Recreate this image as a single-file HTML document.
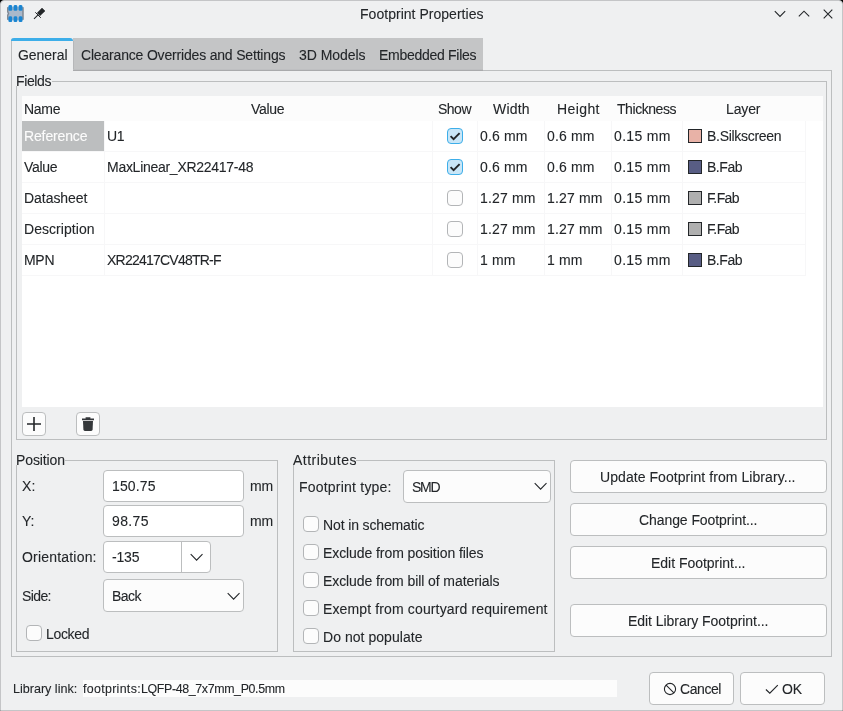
<!DOCTYPE html>
<html>
<head>
<meta charset="utf-8">
<title>Footprint Properties</title>
<style>
html,body{margin:0;padding:0;}
body{width:843px;height:711px;overflow:hidden;background:#000;position:relative;
  font-family:"Liberation Sans",sans-serif;color:#232629;font-size:13.7px;}
#win{position:absolute;left:0;top:0;width:841px;height:709px;background:#eff0f1;
  border:1px solid #c4c5c7;border-radius:4px 4px 0 0;}
.abs,.t,.ln,.box,.btn,.inp,.cb,.sw{position:absolute;box-sizing:border-box;}
.t{white-space:pre;height:20px;line-height:20px;will-change:transform;-webkit-text-stroke:0.1px currentColor;}
.ln{background:#bcbebf;}
.box{border:1px solid #bcbebf;}
.btn{background:#fcfcfc;border:1px solid #bcbebf;border-radius:4px;}
.inp{background:#ffffff;border:1px solid #bcbebf;border-radius:4px;}
.cb{width:16px;height:16px;background:#fcfcfc;border:1px solid #b3b5b7;border-radius:4px;}
.cb.on{background:#c9e6f7;border-color:#3daee9;}
.sw{width:14px;height:14px;border:1px solid #232629;}
.gl{position:absolute;background:#f7f7f8;}
svg{position:absolute;overflow:visible;}
</style>
</head>
<body>
<div id="win"></div>

<!-- title bar icons -->
<svg style="left:6.8px;top:5.4px" width="17" height="17" viewBox="0 0 17 17">
  <rect x="0.3" y="1.9" width="16.2" height="13.2" rx="0.8" fill="#aab8ca"/>
  <path d="M0.8 2.2 V7 L1.6 8.5 L0.8 10 V14.8 M16 2.2 V14.8" stroke="#6d7176" stroke-width="1" fill="none"/>
  <rect x="1.4" y="0" width="3.9" height="5.8" rx="1.3" ry="1.6" fill="#1b85d1"/>
  <rect x="6.5" y="0" width="3.9" height="5.8" rx="1.3" ry="1.6" fill="#1b85d1"/>
  <rect x="11.6" y="0" width="3.9" height="5.8" rx="1.3" ry="1.6" fill="#1b85d1"/>
  <rect x="1.4" y="11.3" width="3.9" height="5.7" rx="1.3" ry="1.6" fill="#1b85d1"/>
  <rect x="6.5" y="11.3" width="3.9" height="5.7" rx="1.3" ry="1.6" fill="#1b85d1"/>
  <rect x="11.6" y="11.3" width="3.9" height="5.7" rx="1.3" ry="1.6" fill="#1b85d1"/>
</svg>
<svg style="left:33px;top:7px" width="13" height="13" viewBox="0 0 13 13">
  <path d="M9 1.1 L12 4 L7 8.7 L4.2 5.9 Z" fill="#232629" stroke="#232629" stroke-width="0.5" stroke-linejoin="round"/>
  <path d="M2.3 5.3 L7.8 10.8" stroke="#232629" stroke-width="1" fill="none"/>
  <path d="M4.8 8.1 L1 11.9" stroke="#232629" stroke-width="1.1" fill="none"/>
</svg>
<!-- window buttons -->
<svg style="left:774px;top:8px" width="12" height="12" viewBox="0 0 12 12">
  <path d="M0.8 3.2 L6 8.4 L11.2 3.2" stroke="#232629" stroke-width="1.1" fill="none"/>
</svg>
<svg style="left:798px;top:8px" width="12" height="12" viewBox="0 0 12 12">
  <path d="M0.8 8.4 L6 3.2 L11.2 8.4" stroke="#232629" stroke-width="1.1" fill="none"/>
</svg>
<svg style="left:822px;top:8px" width="12" height="12" viewBox="0 0 12 12">
  <path d="M1.7 1.7 L10.3 10.3 M10.3 1.7 L1.7 10.3" stroke="#232629" stroke-width="1.1" fill="none"/>
</svg>

<!-- tab bar -->
<div class="abs" style="left:73px;top:38px;width:410px;height:32px;background:#c4c5c6;"></div>
<div class="abs" style="left:73px;top:41px;width:1px;height:29px;background:#b6b7b9;"></div>
<div class="abs" style="left:73px;top:69px;width:410px;height:1px;background:#bebfc1;"></div>
<!-- tab pane frame -->
<div class="box" style="left:11px;top:70px;width:821px;height:587px;"></div>
<!-- active tab -->
<div class="abs" style="left:11px;top:38px;width:62px;height:33px;background:#eff0f1;border-left:1px solid #bcbebf;border-radius:3px 3px 0 0;"></div>
<div class="abs" style="left:11px;top:38px;width:62px;height:3px;background:#3daee9;border-radius:3px 3px 0 0;"></div>

<div class="abs" style="left:73px;top:70px;width:410px;height:1px;background:#a9aaac;"></div>
<!-- Fields group -->
<div class="box" style="left:16px;top:81px;width:811px;height:359px;"></div>
<div class="abs" style="left:16px;top:76px;width:36px;height:10px;background:#eff0f1;"></div>

<!-- grid -->
<div class="abs" style="left:22px;top:96px;width:801px;height:311px;background:#ffffff;"></div>
<div class="abs" style="left:22px;top:96px;width:801px;height:25px;background:#fcfcfc;"></div>
<!-- selected cell -->
<div class="abs" style="left:22px;top:121px;width:82px;height:30px;background:#bcbebf;"></div>
<!-- grid lines horizontal -->
<div class="gl" style="left:22px;top:151px;width:784px;height:1px;"></div>
<div class="gl" style="left:22px;top:182px;width:784px;height:1px;"></div>
<div class="gl" style="left:22px;top:213px;width:784px;height:1px;"></div>
<div class="gl" style="left:22px;top:244px;width:784px;height:1px;"></div>
<div class="gl" style="left:22px;top:275px;width:784px;height:1px;"></div>
<!-- grid lines vertical -->
<div class="gl" style="left:104px;top:121px;width:1px;height:155px;"></div>
<div class="gl" style="left:432px;top:121px;width:1px;height:155px;"></div>
<div class="gl" style="left:477px;top:121px;width:1px;height:155px;"></div>
<div class="gl" style="left:544px;top:121px;width:1px;height:155px;"></div>
<div class="gl" style="left:611px;top:121px;width:1px;height:155px;"></div>
<div class="gl" style="left:682px;top:121px;width:1px;height:155px;"></div>
<div class="gl" style="left:805px;top:121px;width:1px;height:155px;"></div>

<!-- grid checkboxes -->
<div class="cb on" style="left:447px;top:128px;"></div>
<div class="cb on" style="left:447px;top:159px;"></div>
<div class="cb" style="left:447px;top:190px;"></div>
<div class="cb" style="left:447px;top:221px;"></div>
<div class="cb" style="left:447px;top:252px;"></div>
<svg style="left:447px;top:128px" width="16" height="16" viewBox="0 0 16 16"><path d="M3.6 8.2 L6.6 11.2 L12.6 5.2" stroke="#232629" stroke-width="1.9" fill="none"/></svg>
<svg style="left:447px;top:159px" width="16" height="16" viewBox="0 0 16 16"><path d="M3.6 8.2 L6.6 11.2 L12.6 5.2" stroke="#232629" stroke-width="1.9" fill="none"/></svg>

<!-- swatches -->
<div class="sw" style="left:688px;top:129px;background:#e8b2a7;"></div>
<div class="sw" style="left:688px;top:160px;background:#585d84;"></div>
<div class="sw" style="left:688px;top:191px;background:#afafaf;"></div>
<div class="sw" style="left:688px;top:222px;background:#afafaf;"></div>
<div class="sw" style="left:688px;top:253px;background:#585d84;"></div>

<!-- add / delete buttons -->
<div class="btn" style="left:22px;top:412px;width:24px;height:24px;"></div>
<svg style="left:26px;top:416px" width="16" height="16" viewBox="0 0 16 16"><path d="M8 1 V15 M1 8 H15" stroke="#232629" stroke-width="1.6" fill="none"/></svg>
<div class="btn" style="left:76px;top:412px;width:24px;height:24px;"></div>
<svg style="left:80px;top:416px" width="16" height="16" viewBox="0 0 16 16">
  <path d="M5.6 1.2 H10.4 V2.4 H14 V4.3 H2 V2.4 H5.6 Z" fill="#34373a"/>
  <path d="M3 5.1 H13 L12.6 13.6 Q12.5 15 11.2 15 H4.8 Q3.5 15 3.4 13.6 Z" fill="#34373a"/>
</svg>

<!-- Position group -->
<div class="box" style="left:16px;top:460px;width:262px;height:192px;"></div>
<div class="abs" style="left:16px;top:455px;width:48.5px;height:10px;background:#eff0f1;"></div>
<div class="inp" style="left:103px;top:470px;width:141px;height:32px;"></div>
<div class="inp" style="left:103px;top:505px;width:141px;height:32px;"></div>
<div class="inp" style="left:103px;top:541px;width:108px;height:32px;"></div>
<div class="ln" style="left:181px;top:542px;width:1px;height:30px;"></div>
<svg style="left:189.5px;top:551px" width="13" height="13" viewBox="0 0 13 13"><path d="M0.7 3.2 L6.6 9.1 L12.5 3.2" stroke="#232629" stroke-width="1.1" fill="none"/></svg>
<div class="btn" style="left:103px;top:579px;width:141px;height:33px;"></div>
<svg style="left:226.5px;top:589.5px" width="13" height="13" viewBox="0 0 13 13"><path d="M0.7 3.2 L6.6 9.1 L12.5 3.2" stroke="#232629" stroke-width="1.1" fill="none"/></svg>
<div class="cb" style="left:26px;top:625px;"></div>

<!-- Attributes group -->
<div class="box" style="left:293px;top:460px;width:262px;height:192px;"></div>
<div class="abs" style="left:293px;top:455px;width:63.3px;height:10px;background:#eff0f1;"></div>
<div class="btn" style="left:403px;top:470px;width:148px;height:33px;"></div>
<svg style="left:533.5px;top:480.3px" width="13" height="13" viewBox="0 0 13 13"><path d="M0.7 3.2 L6.6 9.1 L12.5 3.2" stroke="#232629" stroke-width="1.1" fill="none"/></svg>
<div class="cb" style="left:303px;top:516px;"></div>
<div class="cb" style="left:303px;top:544px;"></div>
<div class="cb" style="left:303px;top:572px;"></div>
<div class="cb" style="left:303px;top:600px;"></div>
<div class="cb" style="left:303px;top:628px;"></div>

<!-- right buttons -->
<div class="btn" style="left:570px;top:460px;width:257px;height:33px;"></div>
<div class="btn" style="left:570px;top:503px;width:257px;height:33px;"></div>
<div class="btn" style="left:570px;top:546px;width:257px;height:33px;"></div>
<div class="btn" style="left:570px;top:604px;width:257px;height:33px;"></div>

<!-- bottom row -->
<div class="abs" style="left:83px;top:680px;width:534px;height:17px;background:#fcfcfc;"></div>
<div class="btn" style="left:649px;top:672px;width:85px;height:33px;"></div>
<div class="btn" style="left:740px;top:672px;width:85px;height:33px;"></div>
<svg style="left:663px;top:681.7px" width="14" height="14" viewBox="0 0 14 14"><circle cx="7" cy="7" r="5.6" stroke="#232629" stroke-width="1.1" fill="none"/><path d="M3.1 3.1 L10.9 10.9" stroke="#232629" stroke-width="1.1"/></svg>
<svg style="left:765px;top:681.7px" width="14" height="14" viewBox="0 0 14 14"><path d="M0.9 7.5 L4.8 11.2 L12.8 3.1" stroke="#232629" stroke-width="1.1" fill="none"/></svg>

<span class="t" style="left:360px;top:4px;font-size:14px;letter-spacing:0.029px;">Footprint Properties</span>
<span class="t" style="left:18px;top:45px;font-size:14px;letter-spacing:-0.052px;">General</span>
<span class="t" style="left:81px;top:45px;font-size:14px;letter-spacing:-0.181px;">Clearance Overrides and Settings</span>
<span class="t" style="left:299px;top:45px;font-size:14px;letter-spacing:-0.053px;">3D Models</span>
<span class="t" style="left:379px;top:45px;font-size:14px;letter-spacing:-0.282px;">Embedded Files</span>
<span class="t" style="left:16px;top:71px;font-size:14px;letter-spacing:-0.372px;">Fields</span>
<span class="t" style="left:24px;top:99px;font-size:14px;letter-spacing:-0.286px;">Name</span>
<span class="t" style="left:251px;top:99px;font-size:14px;letter-spacing:-0.320px;">Value</span>
<span class="t" style="left:438px;top:99px;font-size:14px;letter-spacing:-0.510px;">Show</span>
<span class="t" style="left:493px;top:99px;font-size:14px;letter-spacing:0.176px;">Width</span>
<span class="t" style="left:557px;top:99px;font-size:14px;letter-spacing:0.406px;">Height</span>
<span class="t" style="left:617px;top:99px;font-size:14px;letter-spacing:-0.441px;">Thickness</span>
<span class="t" style="left:726px;top:99px;font-size:14px;letter-spacing:-0.133px;">Layer</span>
<span class="t" style="left:24px;top:126px;font-size:14px;letter-spacing:-0.137px;color:#fcfcfc">Reference</span>
<span class="t" style="left:107px;top:126px;font-size:14px;letter-spacing:-0.406px;">U1</span>
<span class="t" style="left:480px;top:126px;font-size:14px;letter-spacing:0.163px;">0.6 mm</span>
<span class="t" style="left:547px;top:126px;font-size:14px;letter-spacing:0.163px;">0.6 mm</span>
<span class="t" style="left:614px;top:126px;font-size:14px;letter-spacing:0.339px;">0.15 mm</span>
<span class="t" style="left:707px;top:126px;font-size:14px;letter-spacing:-0.301px;">B.Silkscreen</span>
<span class="t" style="left:24px;top:157px;font-size:14px;letter-spacing:-0.320px;">Value</span>
<span class="t" style="left:107px;top:157px;font-size:14px;letter-spacing:-0.277px;">MaxLinear_XR22417-48</span>
<span class="t" style="left:480px;top:157px;font-size:14px;letter-spacing:0.163px;">0.6 mm</span>
<span class="t" style="left:547px;top:157px;font-size:14px;letter-spacing:0.163px;">0.6 mm</span>
<span class="t" style="left:614px;top:157px;font-size:14px;letter-spacing:0.339px;">0.15 mm</span>
<span class="t" style="left:707px;top:157px;font-size:14px;letter-spacing:-0.465px;">B.Fab</span>
<span class="t" style="left:24px;top:188px;font-size:14px;letter-spacing:-0.041px;">Datasheet</span>
<span class="t" style="left:480px;top:188px;font-size:14px;letter-spacing:0.172px;">1.27 mm</span>
<span class="t" style="left:547px;top:188px;font-size:14px;letter-spacing:0.172px;">1.27 mm</span>
<span class="t" style="left:614px;top:188px;font-size:14px;letter-spacing:0.339px;">0.15 mm</span>
<span class="t" style="left:707px;top:188px;font-size:14px;letter-spacing:-0.629px;">F.Fab</span>
<span class="t" style="left:24px;top:219px;font-size:14px;letter-spacing:0.047px;">Description</span>
<span class="t" style="left:480px;top:219px;font-size:14px;letter-spacing:0.172px;">1.27 mm</span>
<span class="t" style="left:547px;top:219px;font-size:14px;letter-spacing:0.172px;">1.27 mm</span>
<span class="t" style="left:614px;top:219px;font-size:14px;letter-spacing:0.339px;">0.15 mm</span>
<span class="t" style="left:707px;top:219px;font-size:14px;letter-spacing:-0.629px;">F.Fab</span>
<span class="t" style="left:24px;top:250px;font-size:14px;letter-spacing:-0.312px;">MPN</span>
<span class="t" style="left:107px;top:250px;font-size:14px;letter-spacing:-0.770px;">XR22417CV48TR-F</span>
<span class="t" style="left:480px;top:250px;font-size:14px;letter-spacing:0.167px;">1 mm</span>
<span class="t" style="left:547px;top:250px;font-size:14px;letter-spacing:0.167px;">1 mm</span>
<span class="t" style="left:614px;top:250px;font-size:14px;letter-spacing:0.339px;">0.15 mm</span>
<span class="t" style="left:707px;top:250px;font-size:14px;letter-spacing:-0.465px;">B.Fab</span>
<span class="t" style="left:16px;top:450px;font-size:14px;letter-spacing:-0.116px;">Position</span>
<span class="t" style="left:22px;top:476px;font-size:14px;letter-spacing:0.266px;">X:</span>
<span class="t" style="left:112px;top:476px;font-size:14px;letter-spacing:0.134px;">150.75</span>
<span class="t" style="left:250px;top:476px;font-size:14px;letter-spacing:-0.228px;">mm</span>
<span class="t" style="left:22px;top:511px;font-size:14px;letter-spacing:0.031px;">Y:</span>
<span class="t" style="left:112px;top:511px;font-size:14px;letter-spacing:0.363px;">98.75</span>
<span class="t" style="left:250px;top:511px;font-size:14px;letter-spacing:-0.228px;">mm</span>
<span class="t" style="left:22px;top:547px;font-size:14px;letter-spacing:0.193px;">Orientation:</span>
<span class="t" style="left:112px;top:547px;font-size:14px;letter-spacing:-0.177px;">-135</span>
<span class="t" style="left:22px;top:586px;font-size:14px;letter-spacing:-0.605px;">Side:</span>
<span class="t" style="left:112px;top:586px;font-size:14px;letter-spacing:-0.542px;">Back</span>
<span class="t" style="left:46px;top:624px;font-size:14px;letter-spacing:-0.331px;">Locked</span>
<span class="t" style="left:293px;top:450px;font-size:14px;letter-spacing:0.484px;">Attributes</span>
<span class="t" style="left:299px;top:477px;font-size:14px;letter-spacing:0.214px;">Footprint type:</span>
<span class="t" style="left:412px;top:477px;font-size:14px;letter-spacing:-1.312px;">SMD</span>
<span class="t" style="left:323px;top:515px;font-size:14px;letter-spacing:-0.132px;">Not in schematic</span>
<span class="t" style="left:323px;top:543px;font-size:14px;letter-spacing:-0.082px;">Exclude from position files</span>
<span class="t" style="left:323px;top:571px;font-size:14px;letter-spacing:-0.085px;">Exclude from bill of materials</span>
<span class="t" style="left:323px;top:599px;font-size:14px;letter-spacing:0.134px;">Exempt from courtyard requirement</span>
<span class="t" style="left:323px;top:627px;font-size:14px;letter-spacing:0.046px;">Do not populate</span>
<span class="t" style="left:600px;top:467px;font-size:14px;letter-spacing:0.065px;">Update Footprint from Library...</span>
<span class="t" style="left:639px;top:510px;font-size:14px;letter-spacing:-0.076px;">Change Footprint...</span>
<span class="t" style="left:651px;top:553px;font-size:14px;letter-spacing:-0.027px;">Edit Footprint...</span>
<span class="t" style="left:628px;top:611px;font-size:14px;letter-spacing:-0.047px;">Edit Library Footprint...</span>
<span class="t" style="left:13.3px;top:679px;font-size:12.6px;letter-spacing:-0.016px;">Library link:</span>
<span class="t" style="left:83.4px;top:679px;font-size:12.4px;letter-spacing:0.318px;">footprints:</span>
<span class="t" style="left:140.5px;top:679px;font-size:12.4px;letter-spacing:-0.359px;">LQFP-48_7x7mm_P0.5mm</span>
<span class="t" style="left:680px;top:679px;font-size:14px;letter-spacing:-0.419px;">Cancel</span>
<span class="t" style="left:782px;top:679px;font-size:14px;letter-spacing:-0.234px;">OK</span>
</body>
</html>
